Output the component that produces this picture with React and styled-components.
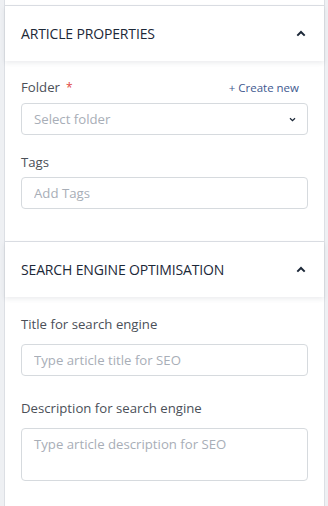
import React from "react";
import styled, { createGlobalStyle } from "styled-components";

const GlobalStyle = createGlobalStyle`
  html, body {
    margin: 0;
    padding: 0;
    background: #eef0f3;
  }
  body {
    font-family: "Open Sans", "Noto Sans", sans-serif;
  }
`;

const Page = styled.div`
  min-height: 506px;
  padding: 0 3px 0 4px;
  box-sizing: border-box;
`;

const Panel = styled.div`
  background: #fff;
  border-left: 1px solid #dcdfe4;
  border-right: 1px solid #dcdfe4;
  min-height: 506px;
`;

const TopStub = styled.div`
  height: 5px;
`;

const Section = styled.section`
  border-top: 1px solid #dcdfe4;
`;

const Header = styled.div`
  position: relative;
  z-index: 1;
  height: 55px;
  display: flex;
  align-items: center;
  justify-content: space-between;
  padding: 0 16px;
  background: #fff;
  box-shadow: 0 2px 5px rgba(30, 45, 70, 0.09);
`;

const Title = styled.h2`
  margin: 0;
  font-size: 14px;
  font-weight: 400;
  letter-spacing: -0.15px;
  color: #1c2838;
  text-transform: uppercase;
`;

const Toggle = styled.button`
  border: 0;
  background: none;
  padding: 0;
  margin-right: 2px;
  display: flex;
  color: #1c2838;
  cursor: pointer;
`;

const Body = styled.div`
  padding: ${(p) => (p.$loose ? "17px 16px 32px" : "16px 16px 32px")};
  display: flex;
  flex-direction: column;
  gap: ${(p) => (p.$loose ? "22px" : "17px")};
`;

const Field = styled.div`
  display: flex;
  flex-direction: column;
  gap: ${(p) => (p.$loose ? "10px" : "5px")};
`;

const LabelRow = styled.div`
  display: flex;
  align-items: center;
  justify-content: space-between;
  height: ${(p) => (p.$tall ? "21px" : "20px")};
`;

const Label = styled.label`
  font-size: 13.2px;
  line-height: 20px;
  color: #4b5058;
`;

const Required = styled.span`
  color: #e0483e;
  margin-left: 6px;
  font-size: 12px;
`;

const CreateLink = styled.a`
  font-size: 11.5px;
  color: #41598f;
  text-decoration: none;
  margin-right: 9px;
  cursor: pointer;
`;

const Control = styled.div`
  display: flex;
  align-items: center;
  height: 32px;
  box-sizing: border-box;
  border: 1px solid #d6dade;
  border-radius: 4px;
  padding: 0 12px;
`;

const Input = styled.input`
  width: 100%;
  border: 0;
  outline: none;
  padding: 0;
  font-family: inherit;
  font-size: 13.2px;
  color: #333;
  background: transparent;
  &::placeholder {
    color: #a8aeb7;
  }
`;

const TextArea = styled.textarea`
  width: 100%;
  height: 53px;
  box-sizing: border-box;
  border: 1px solid #d6dade;
  border-radius: 4px;
  padding: 6px 12px;
  resize: none;
  outline: none;
  font-family: inherit;
  font-size: 13.2px;
  line-height: 18px;
  &::placeholder {
    color: #a8aeb7;
  }
`;

const Placeholder = styled.span`
  flex: 1;
  font-size: 13.2px;
  color: #a8aeb7;
`;

const Caret = styled.span`
  display: flex;
  color: #1c2838;
  margin-right: -1px;
`;

const ChevronUp = () => (
  <svg width="10" height="7" viewBox="0 0 10 7">
    <path d="M1.3 5.6 L5 2 L8.7 5.6" fill="none" stroke="currentColor" strokeWidth="2" />
  </svg>
);

const ChevronDown = () => (
  <svg width="7" height="5" viewBox="0 0 7 5">
    <path d="M1 1.2 L3.5 3.7 L6 1.2" fill="none" stroke="currentColor" strokeWidth="1.3" />
  </svg>
);

const App = () => {
  return (
    <Page>
      <GlobalStyle />
      <Panel>
        <TopStub />
        <Section>
          <Header>
            <Title>Article properties</Title>
            <Toggle aria-label="Collapse">
              <ChevronUp />
            </Toggle>
          </Header>
          <Body>
            <Field>
              <LabelRow $tall>
                <Label>
                  Folder<Required>*</Required>
                </Label>
                <CreateLink>+ Create new</CreateLink>
              </LabelRow>
              <Control>
                <Placeholder>Select folder</Placeholder>
                <Caret>
                  <ChevronDown />
                </Caret>
              </Control>
            </Field>
            <Field>
              <LabelRow>
                <Label>Tags</Label>
              </LabelRow>
              <Control>
                <Input placeholder="Add Tags" />
              </Control>
            </Field>
          </Body>
        </Section>
        <Section>
          <Header>
            <Title>Search engine optimisation</Title>
            <Toggle aria-label="Collapse">
              <ChevronUp />
            </Toggle>
          </Header>
          <Body $loose>
            <Field $loose>
              <Label>Title for search engine</Label>
              <Control>
                <Input placeholder="Type article title for SEO" />
              </Control>
            </Field>
            <Field $loose>
              <Label>Description for search engine</Label>
              <TextArea placeholder="Type article description for SEO" />
            </Field>
          </Body>
        </Section>
      </Panel>
    </Page>
  );
};

export default App;
